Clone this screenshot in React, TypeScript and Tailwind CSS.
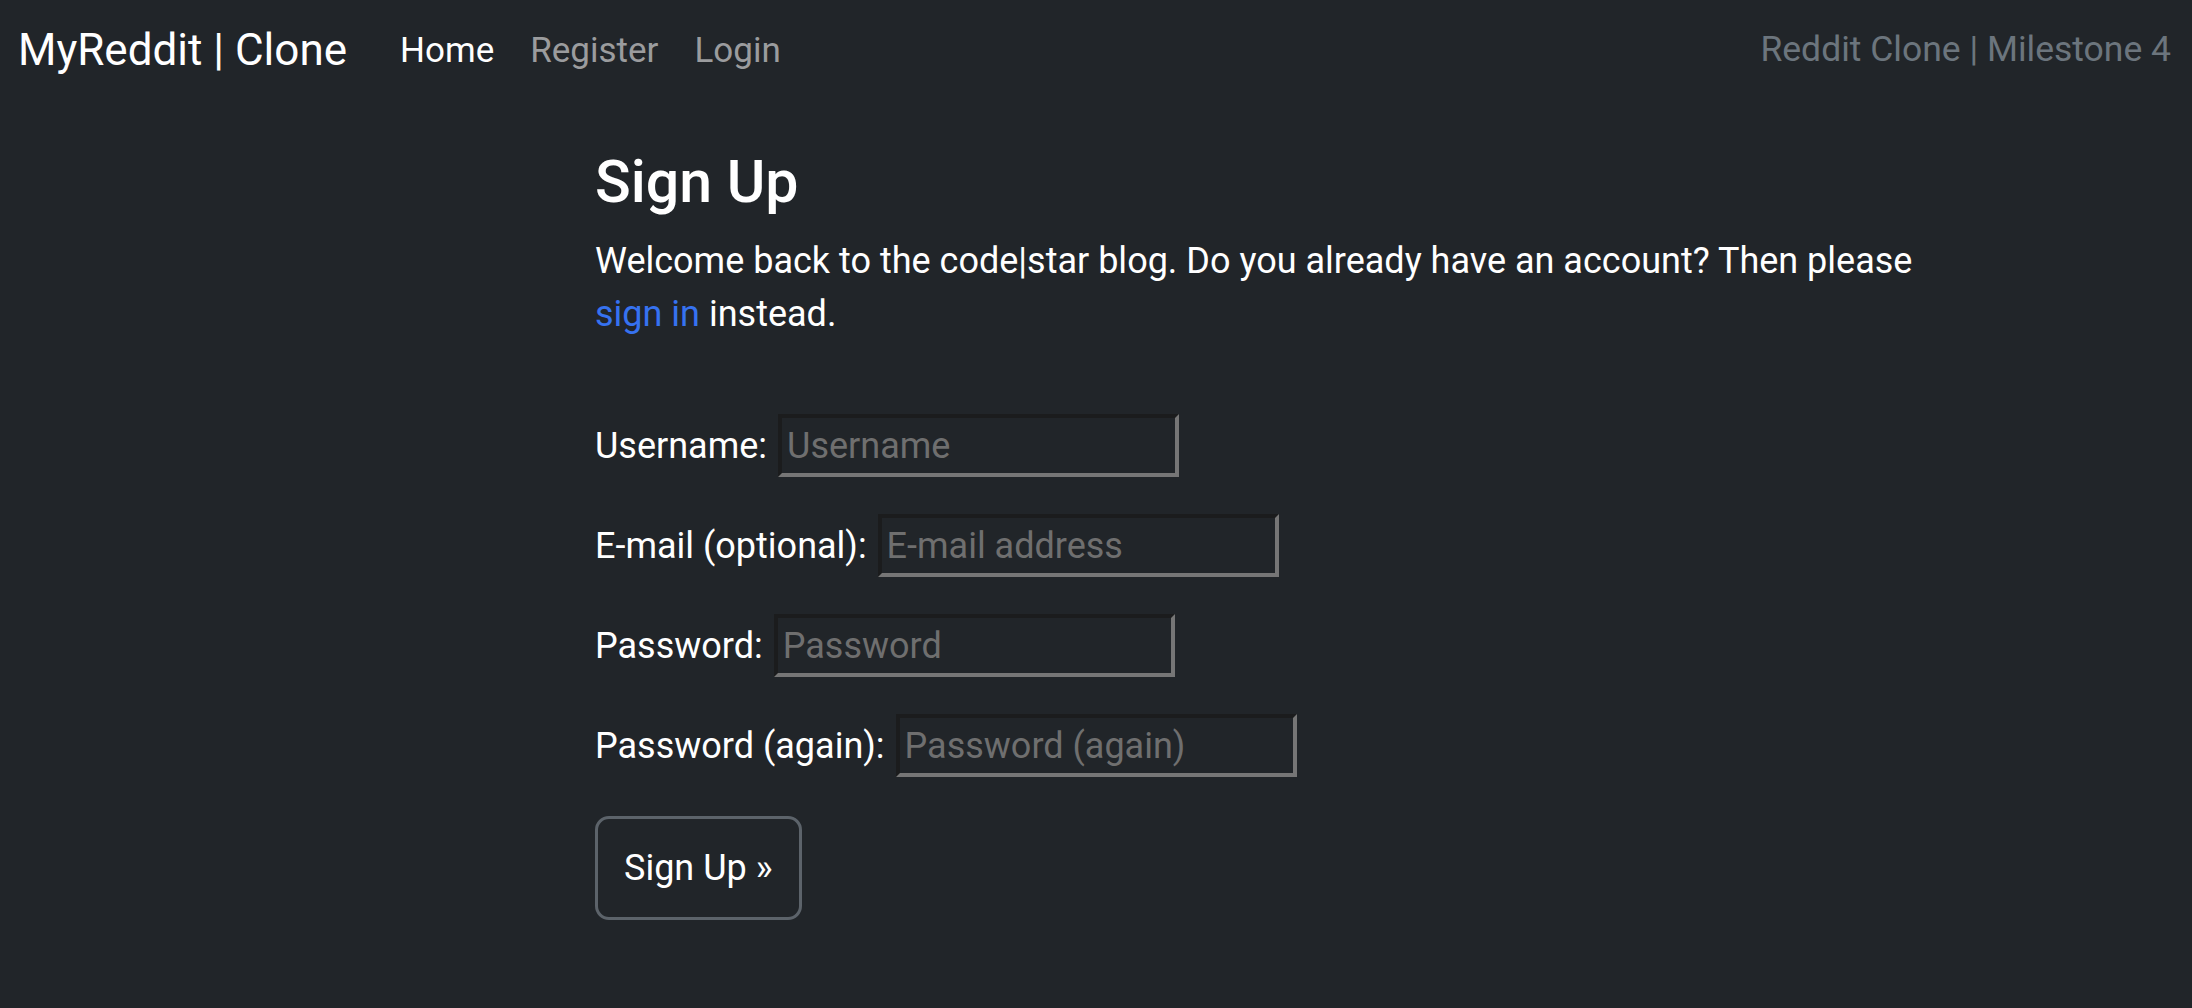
import React from "react";

const fields = [
  { id: "username", label: "Username:", placeholder: "Username", type: "text" },
  { id: "email", label: "E-mail (optional):", placeholder: "E-mail address", type: "email" },
  { id: "password1", label: "Password:", placeholder: "Password", type: "password" },
  { id: "password2", label: "Password (again):", placeholder: "Password (again)", type: "password" },
];

export default function App() {
  return (
    <div
      className="min-h-screen w-full bg-[#212529] text-white"
      style={{ fontFamily: "Roboto, 'Noto Sans', sans-serif" }}
    >
      {/* navbar */}
      <nav className="flex h-[100px] items-center justify-between pl-[18px] pr-[21px]">
        <div className="flex items-center">
          <a href="#" className="mr-[35px] text-[44px] leading-none text-white">
            MyReddit | Clone
          </a>
          <ul className="flex items-center text-[35px] leading-none">
            <li>
              <a href="#" className="px-[18px] text-white">Home</a>
            </li>
            <li>
              <a href="#" className="px-[18px] text-[#9b9c9e]">Register</a>
            </li>
            <li>
              <a href="#" className="px-[18px] text-[#9b9c9e]">Login</a>
            </li>
          </ul>
        </div>
        <span className="text-[35.5px] leading-none text-[#6c757d]">
          Reddit Clone | Milestone 4
        </span>
      </nav>

      <main className="pl-[595px] pt-[46px]">
        <h3 className="mb-[18px] text-[59px] font-medium leading-[71px]">Sign Up</h3>
        <p className="mb-[73px] w-[1330px] text-[36px] leading-[53px]">
          Welcome back to the code|star blog. Do you already have an account? Then please{" "}
          <a href="#" className="text-[#3672f0]">sign in</a> instead.
        </p>

        <form className="flex flex-col items-start gap-[37px]">
          {fields.map((f) => (
            <div key={f.id} className="flex h-[63px] items-center gap-[11px] text-[36px]">
              <label htmlFor={f.id}>{f.label}</label>
              <input
                id={f.id}
                type={f.type}
                placeholder={f.placeholder}
                className="h-[63px] w-[401px] border-[4px] border-t-[#1b1c1d] border-l-[#1b1c1d] border-b-[#767676] border-r-[#767676] bg-transparent px-[5px] text-[36px] text-white outline-none placeholder:text-[#6f6f6f]"
              />
            </div>
          ))}
          <button
            type="button"
            className="mt-[2px] h-[104px] whitespace-nowrap rounded-[14px] border-[3px] border-[#5c636a] px-[26px] text-[36px] text-white"
          >
            Sign Up »
          </button>
        </form>
      </main>
    </div>
  );
}
